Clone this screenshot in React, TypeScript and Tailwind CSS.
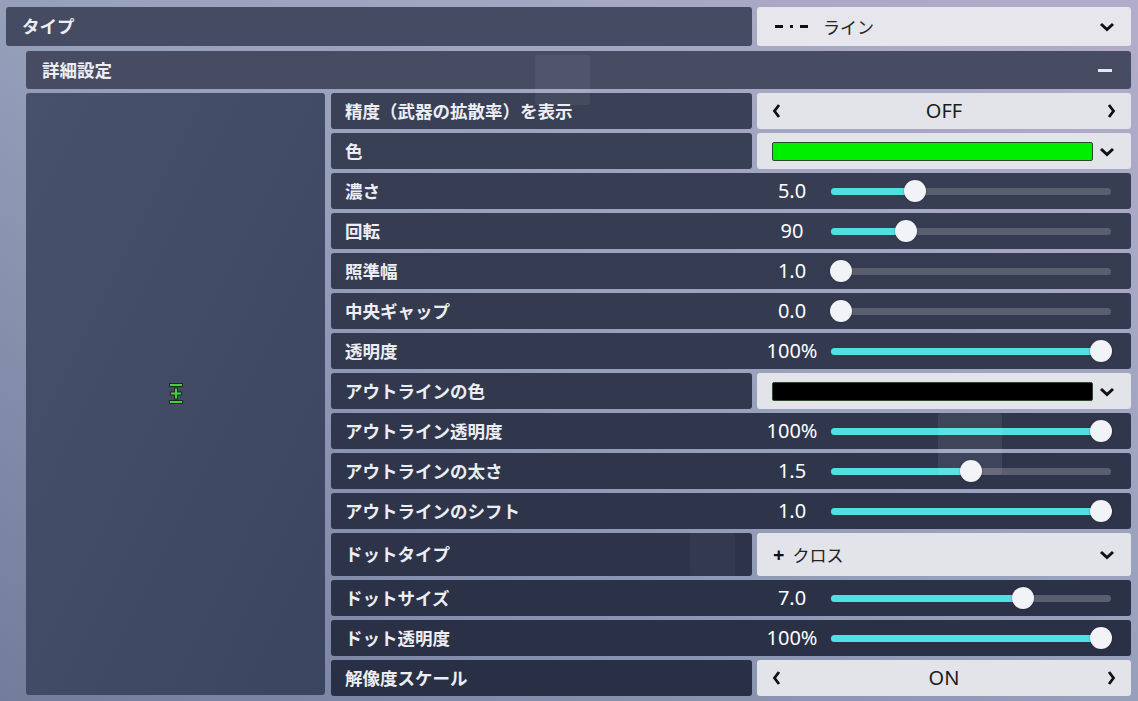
import type { ReactNode } from "react";

const jp = "font-['Noto_Sans_CJK_JP','Noto_Sans',sans-serif]";

type Row =
  | { kind: "slider"; label: string; value: string; frac: number; tone: string }
  | { kind: "toggle"; label: string; value: string; tone: string }
  | { kind: "swatch"; label: string; color: string; tone: string }
  | { kind: "select"; label: string; tone: string; tall?: boolean };

const rows: Row[] = [
  { kind: "toggle", label: "精度（武器の拡散率）を表示", value: "OFF", tone: "bg-[#3a4157]" },
  { kind: "swatch", label: "色", color: "bg-[#00ee00]", tone: "bg-[#384055]" },
  { kind: "slider", label: "濃さ", value: "5.0", frac: 0.285, tone: "bg-[#373e54]" },
  { kind: "slider", label: "回転", value: "90", frac: 0.25, tone: "bg-[#363d53]" },
  { kind: "slider", label: "照準幅", value: "1.0", frac: 0, tone: "bg-[#353c52]" },
  { kind: "slider", label: "中央ギャップ", value: "0.0", frac: 0, tone: "bg-[#343b51]" },
  { kind: "slider", label: "透明度", value: "100%", frac: 1, tone: "bg-[#333a50]" },
  { kind: "swatch", label: "アウトラインの色", color: "bg-black", tone: "bg-[#32394f]" },
  { kind: "slider", label: "アウトライン透明度", value: "100%", frac: 1, tone: "bg-[#30374d]" },
  { kind: "slider", label: "アウトラインの太さ", value: "1.5", frac: 0.5, tone: "bg-[#2f364c]" },
  { kind: "slider", label: "アウトラインのシフト", value: "1.0", frac: 1, tone: "bg-[#2e354b]" },
  { kind: "select", label: "ドットタイプ", tone: "bg-[#2d344a]", tall: true },
  { kind: "slider", label: "ドットサイズ", value: "7.0", frac: 0.7, tone: "bg-[#2b3248]" },
  { kind: "slider", label: "ドット透明度", value: "100%", frac: 1, tone: "bg-[#2a3147]" },
  { kind: "toggle", label: "解像度スケール", value: "ON", tone: "bg-[#293046]" },
];

const Chevron = ({ dir }: { dir: "down" | "left" | "right" }) => {
  if (dir === "down")
    return (
      <svg width="16" height="10" viewBox="0 0 16 10">
        <polyline points="2,2 8,7.5 14,2" fill="none" stroke="#111" strokeWidth="3" strokeLinejoin="miter" />
      </svg>
    );
  const pts = dir === "left" ? "7,2 2.5,8 7,14" : "3,2 7.5,8 3,14";
  return (
    <svg width="10" height="16" viewBox="0 0 10 16">
      <polyline points={pts} fill="none" stroke="#111" strokeWidth="2.8" />
    </svg>
  );
};

const Label = ({ text, tone }: { text: string; tone: string }) => (
  <div className={`flex h-full flex-1 items-center rounded-[3px] pl-[14px] ${tone}`}>
    <span className={`${jp} text-[17.5px] font-bold text-[#eceef3]`}>{text}</span>
  </div>
);

const Slider = ({ frac }: { frac: number }) => {
  const center = 10 + frac * 260;
  return (
    <div className="relative ml-[6px] h-[7px] w-[280px] rounded-full bg-[#5a5f70]">
      <div className="h-full rounded-full bg-[#4fe0e2]" style={{ width: center }} />
      <div
        className="absolute top-1/2 h-[22px] w-[22px] -translate-y-1/2 rounded-full bg-[#f2f3f7] shadow-[0_0_2px_rgba(0,0,0,0.4)]"
        style={{ left: center - 11 }}
      />
    </div>
  );
};

const Control = ({ children }: { children: ReactNode }) => (
  <div className="flex h-full w-[374px] items-center rounded-[3px] bg-[#e3e4ea]">{children}</div>
);

const SettingRow = ({ row }: { row: Row }) => {
  const height = row.kind === "select" && row.tall ? "h-[43px]" : "h-[36px]";

  if (row.kind === "slider") {
    return (
      <div className={`flex ${height} items-center rounded-[3px] pl-[14px] pr-[20px] ${row.tone}`}>
        <span className={`${jp} flex-1 text-[17.5px] font-bold text-[#eceef3]`}>{row.label}</span>
        <span className="w-[68px] pl-[2px] text-center font-['Noto_Sans',sans-serif] text-[20px] text-white">{row.value}</span>
        <Slider frac={row.frac} />
      </div>
    );
  }

  return (
    <div className={`flex ${height} gap-[5px]`}>
      <Label text={row.label} tone={row.tone} />
      <Control>
        {row.kind === "toggle" && (
          <div className="flex w-full items-center justify-between px-[15px]">
            <Chevron dir="left" />
            <span className="font-['Noto_Sans',sans-serif] text-[20px] text-[#1c1c1c]">{row.value}</span>
            <Chevron dir="right" />
          </div>
        )}
        {row.kind === "swatch" && (
          <div className="flex w-full items-center pl-[15px] pr-[16px]">
            <div className={`h-[19px] w-[321px] rounded-[2px] border border-[#2a4a2a] ${row.color}`} />
            <div className="ml-auto pt-[2px]">
              <Chevron dir="down" />
            </div>
          </div>
        )}
        {row.kind === "select" && (
          <div className="flex w-full items-center pl-[16px] pr-[16px]">
            <span className="font-['Noto_Sans',sans-serif] text-[20px] font-bold leading-none text-[#111]">+</span>
            <span className={`${jp} ml-[8px] text-[17px] text-[#222]`}>クロス</span>
            <div className="ml-auto">
              <Chevron dir="down" />
            </div>
          </div>
        )}
      </Control>
    </div>
  );
};

const Crosshair = () => (
  <svg width="16" height="24" viewBox="0 0 16 24">
    <g stroke="#1d2a1d" strokeWidth="4" strokeLinecap="square">
      <line x1="3" y1="3" x2="13" y2="3" />
      <line x1="3" y1="20" x2="13" y2="20" />
      <line x1="4" y1="11.5" x2="12" y2="11.5" />
      <line x1="8" y1="7.5" x2="8" y2="15.5" />
    </g>
    <g stroke="#3fd43f" strokeWidth="2" strokeLinecap="square">
      <line x1="3" y1="3" x2="13" y2="3" />
      <line x1="3" y1="20" x2="13" y2="20" />
      <line x1="4" y1="11.5" x2="12" y2="11.5" />
      <line x1="8" y1="7.5" x2="8" y2="15.5" />
    </g>
  </svg>
);

export default function App() {
  return (
    <div className="relative h-[701px] w-[1138px] overflow-hidden bg-linear-to-tr from-[#727d9c] via-[#96a0bb] to-[#b2adca] pl-[6px] pr-[7px] pt-[7px]">
      {/* crosshair type */}
      <div className="flex h-[39px] gap-[5px]">
        <div className="flex flex-1 items-center rounded-[3px] bg-[#444b62] pl-[16px]">
          <span className={`${jp} text-[17.5px] font-bold text-[#eceef3]`}>タイプ</span>
        </div>
        <div className="flex w-[374px] items-center rounded-[3px] bg-[#e6e6ec] pl-[18px] pr-[16px]">
          <div className="flex items-center gap-[7px]">
            <span className="h-[3px] w-[8px] bg-[#111]" />
            <span className="h-[3px] w-[3px] bg-[#111]" />
            <span className="h-[3px] w-[8px] bg-[#111]" />
          </div>
          <span className={`${jp} ml-[15px] text-[17px] text-[#222]`}>ライン</span>
          <div className="ml-auto">
            <Chevron dir="down" />
          </div>
        </div>
      </div>

      {/* detail settings */}
      <div className="ml-[20px] mt-[5px]">
        <div className="flex h-[38px] items-center justify-between rounded-[3px] bg-[#484c63] pl-[16px] pr-[19px]">
          <span className={`${jp} text-[17.5px] font-bold text-[#eceef3]`}>詳細設定</span>
          <span className="h-[3px] w-[14px] bg-[#e8e9ee]" />
        </div>

        <div className="mt-[4px] flex gap-[6px]">
          <div className="flex h-[602px] w-[299px] items-center justify-center rounded-[3px] bg-linear-to-br from-[#48516b] to-[#3a4560]">
            <Crosshair />
          </div>
          <div className="flex flex-1 flex-col gap-[4px]">
            {rows.map((row) => (
              <SettingRow key={row.label} row={row} />
            ))}
          </div>
        </div>
      </div>

      <div className="pointer-events-none absolute left-[535px] top-[55px] h-[50px] w-[55px] rounded-[3px] bg-white/5" />
      <div className="pointer-events-none absolute left-[938px] top-[413px] h-[62px] w-[64px] rounded-[3px] bg-white/7" />
      <div className="pointer-events-none absolute left-[690px] top-[532px] h-[44px] w-[45px] rounded-[3px] bg-white/3" />
    </div>
  );
}
